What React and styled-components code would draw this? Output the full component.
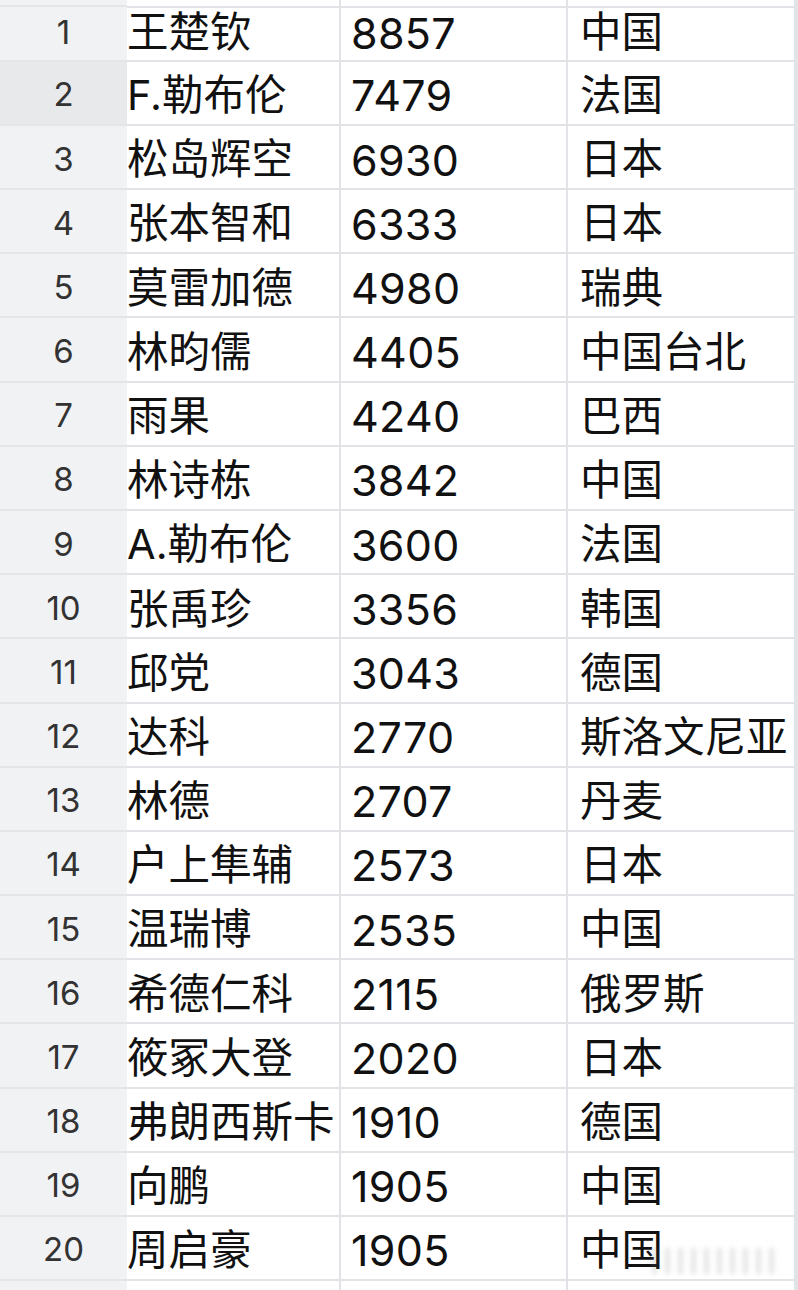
import React from 'react';
import styled, { createGlobalStyle } from 'styled-components';

// Page reset
const GlobalStyle = createGlobalStyle`
  html, body {
    margin: 0;
    padding: 0;
    background: #ffffff;
  }
  body {
    width: 798px;
    height: 1290px;
    overflow: hidden;
  }
`;

const players = [
  ['王楚钦', '8857', '中国'],
  ['F.勒布伦', '7479', '法国'],
  ['松岛辉空', '6930', '日本'],
  ['张本智和', '6333', '日本'],
  ['莫雷加德', '4980', '瑞典'],
  ['林昀儒', '4405', '中国台北'],
  ['雨果', '4240', '巴西'],
  ['林诗栋', '3842', '中国'],
  ['A.勒布伦', '3600', '法国'],
  ['张禹珍', '3356', '韩国'],
  ['邱党', '3043', '德国'],
  ['达科', '2770', '斯洛文尼亚'],
  ['林德', '2707', '丹麦'],
  ['户上隼辅', '2573', '日本'],
  ['温瑞博', '2535', '中国'],
  ['希德仁科', '2115', '俄罗斯'],
  ['筱冢大登', '2020', '日本'],
  ['弗朗西斯卡', '1910', '德国'],
  ['向鹏', '1905', '中国'],
  ['周启豪', '1905', '中国'],
];

const LINE = '#e2e3e6';

// Sheet grid
const Sheet = styled.div`
  position: relative;
  width: 798px;
  height: 1290px;
  overflow: hidden;
  display: flex;
  flex-direction: column;
  font-family: "Inter", "Noto Sans CJK SC", sans-serif;
`;

const Row = styled.div`
  display: grid;
  grid-template-columns: 127px 214px 227px 228px 1fr;
  grid-template-rows: minmax(0, 1fr);
  height: ${p => p.$h}px;
  flex: none;
`;

const RowHeader = styled.div`
  background: ${p => (p.$active ? '#e8e9eb' : '#f1f2f4')};
  border-bottom: 2.5px solid #e4e5e8;
  box-sizing: border-box;
  display: flex;
  align-items: center;
  justify-content: center;
  font-size: 33px;
  line-height: 1;
  color: #333;
  padding-top: 4px;
  padding-bottom: ${p => (p.$first ? 6 : 0)}px;
  overflow: visible;
  min-height: 0;
`;

const Cell = styled.div`
  box-sizing: border-box;
  border-right: 2.5px solid ${LINE};
  border-bottom: 2.5px solid ${LINE};
  display: flex;
  align-items: center;
  padding-left: ${p => p.$pad}px;
  padding-top: 6px;
  padding-bottom: ${p => (p.$first ? 6 : 0)}px;
  font-size: 41.5px;
  line-height: 1;
  color: #111;
  white-space: nowrap;
  overflow: visible;
  min-height: 0;
  position: relative;
  z-index: 1;
`;

const Number = styled.span`
  font-size: 43px;
  letter-spacing: 0.3px;
`;

// faint blurred watermark over last row
const Watermark = styled.div`
  position: absolute;
  left: 652px;
  top: 1248px;
  width: 125px;
  height: 26px;
  filter: blur(2.5px);
  opacity: 0.22;
  background: repeating-linear-gradient(
    90deg,
    #888 0 5px,
    transparent 5px 13px
  );
  z-index: 2;
`;

const rowHeights = [6.5, 55.3, ...Array(19).fill(64.18)];

export default function App() {
  return (
    <>
      <GlobalStyle />
      <Sheet>
        <Row $h={rowHeights[0]}>
          <RowHeader />
          <Cell $pad={0} />
          <Cell $pad={10} />
          <Cell $pad={12} />
          <Cell $pad={0} />
        </Row>
        {players.map((p, i) => (
          <Row key={i} $h={rowHeights[i + 1]}>
            <RowHeader $active={i === 1} $first={i === 0}>{i + 1}</RowHeader>
            <Cell $pad={0} $first={i === 0}>{p[0]}</Cell>
            <Cell $pad={10} $first={i === 0}>
              <Number>{p[1]}</Number>
            </Cell>
            <Cell $pad={12} $first={i === 0}>{p[2]}</Cell>
            <Cell $pad={0} $first={i === 0} />
          </Row>
        ))}
        <Row $h={30}>
          <RowHeader />
          <Cell $pad={0} />
          <Cell $pad={10} />
          <Cell $pad={12} />
          <Cell $pad={0} />
        </Row>
        <Watermark />
      </Sheet>
    </>
  );
}
